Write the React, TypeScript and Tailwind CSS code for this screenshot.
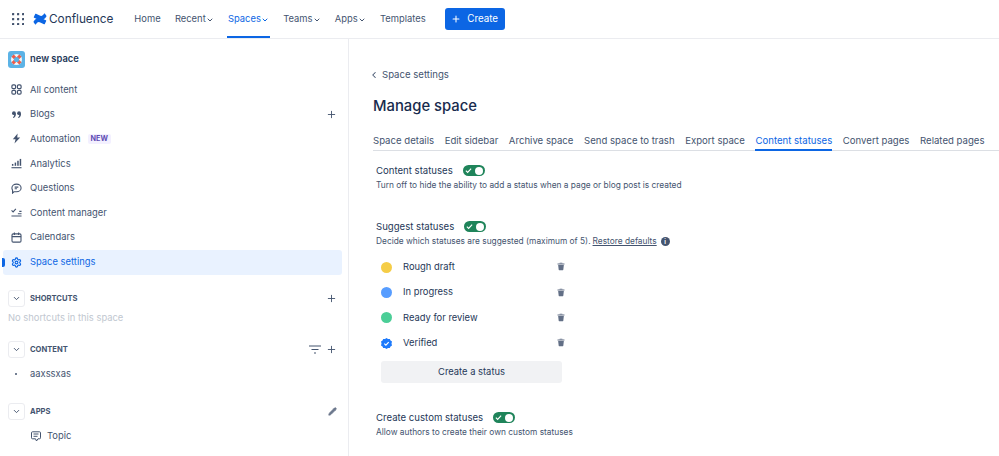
import { ChevronDown, ChevronLeft, Plus, Settings, Pencil } from 'lucide-react'
import type { ReactNode } from 'react'

const ic = { width: 11, height: 11, viewBox: '0 0 12 12', className: 'shrink-0' }

const AllContentIcon = () => (
  <svg {...ic} fill="none" stroke="#44546f" strokeWidth="1.300">
    <rect x="1" y="1" width="4" height="4" rx="1.300" /><rect x="7" y="1" width="4" height="4" rx="1.300" />
    <rect x="1" y="7" width="4" height="4" rx="1.300" /><rect x="7" y="7" width="4" height="4" rx="1.300" />
  </svg>
)
const BlogIcon = () => (
  <svg {...ic} fill="#44546f">
    <circle cx="3.200" cy="4.500" r="2.100" /><circle cx="8.800" cy="4.500" r="2.100" />
    <path d="M3.500 5.500h1.800c0 2.200-.9 3.700-2.800 4.300l-.4-.9c1-.5 1.400-1.500 1.400-3.400zM9.100 5.500h1.800c0 2.200-.9 3.700-2.800 4.300l-.4-.9c1-.5 1.400-1.500 1.400-3.400z" />
  </svg>
)
const BoltIcon = () => (
  <svg {...ic} fill="#44546f"><path d="M7.200.6 2 6.800h3L3.800 11.400 10 4.900H6.800z" /></svg>
)
const AnalyticsIcon = () => (
  <svg {...ic} fill="#44546f">
    <rect x="1" y="6.500" width="1.600" height="2" /><rect x="4" y="5" width="1.600" height="3.500" /><rect x="6.800" y="3" width="1.600" height="5.500" /><rect x="9.500" y="1" width="1.600" height="7.500" />
    <rect x="0.500" y="10" width="11" height="1.200" />
  </svg>
)
const QuestionIcon = () => (
  <svg {...ic} fill="none" stroke="#44546f" strokeWidth="1.200">
    <path d="M6 1.200c2.700 0 5 1.800 5 4.200S8.700 9.600 6 9.600H3.200L1.700 11V7.700C1.200 7 1 6.200 1 5.400 1 3 3.300 1.200 6 1.200zM4 4.500h4M4 6.300h2.500" />
  </svg>
)
const ManagerIcon = () => (
  <svg {...ic} fill="none" stroke="#44546f" strokeWidth="1.200">
    <path d="M.6 3.700l1.700 1.700L5.300 2M.5 9.800h11M7.500 7.300h4M9 4.800h2.500" />
  </svg>
)
const CalendarIcon = () => (
  <svg {...ic} fill="none" stroke="#44546f" strokeWidth="1.200">
    <rect x="1.100" y="2" width="9.800" height="9" rx="1.300" /><path d="M1 5h10M3.700.5v2.800M8.300.5v2.800" />
  </svg>
)
const TrashIcon = () => (
  <svg width="8" height="9" viewBox="0 0 9 9" fill="#626f86"><path d="M.6 1h7.800v1.300H.6zM1.300 2.900h6.400l-.6 5.300c0 .3-.3.600-.6.600H2.500c-.3 0-.6-.3-.6-.6z" /><rect x="2.800" y="0.200" width="3.400" height="1" rx="0.400" /></svg>
)

const navItems = [
  { label: 'All content', icon: AllContentIcon },
  { label: 'Blogs', icon: BlogIcon, plus: true },
  { label: 'Automation', icon: BoltIcon, badge: true },
  { label: 'Analytics', icon: AnalyticsIcon },
  { label: 'Questions', icon: QuestionIcon },
  { label: 'Content manager', icon: ManagerIcon },
  { label: 'Calendars', icon: CalendarIcon },
]

const topLinks = [
  { label: 'Home' },
  { label: 'Recent', caret: true },
  { label: 'Spaces', caret: true, active: true },
  { label: 'Teams', caret: true },
  { label: 'Apps', caret: true },
  { label: 'Templates' },
]

const tabs = ['Space details', 'Edit sidebar', 'Archive space', 'Send space to trash', 'Export space', 'Content statuses', 'Convert pages', 'Related pages']

const statuses = [
  { label: 'Rough draft', color: 'bg-[#f5cd47]' },
  { label: 'In progress', color: 'bg-[#579dff]' },
  { label: 'Ready for review', color: 'bg-[#4bce97]' },
  { label: 'Verified', color: '' },
]

function Toggle() {
  return (
    <span className="flex h-[11px] w-[22px] items-center justify-between rounded-full bg-[#1f845a] px-[2px]">
      <svg width="7" height="7" viewBox="0 0 8 8" fill="none" stroke="white" strokeWidth="1.300"><path d="M1 4.200l2 2 4-4.400" /></svg>
      <span className="h-[8px] w-[8px] rounded-full bg-white" />
    </span>
  )
}

function SectionHead({ label, right }: { label: string; right: ReactNode }) {
  return (
    <div className="flex h-[17px] items-center pl-2 pr-[11px]">
      <span className="flex h-[17px] w-[17px] items-center justify-center rounded-[3px] border border-[#ebecf0]">
        <ChevronDown size={9} strokeWidth={2.500} className="text-[#44546f]" />
      </span>
      <span className="ml-[5px] flex-1 text-[7.600px] font-bold text-[#44546f]">{label}</span>
      {right}
    </div>
  )
}

export default function App() {
  return (
    <div className="flex h-[456px] w-[999px] flex-col overflow-hidden bg-white text-[9.400px] text-[#44546f] [font-family:Inter,sans-serif]">
      <header className="flex h-[39px] shrink-0 items-center border-b-[1.500px] border-[#ebecf0] pl-3">
        <svg width="12" height="12" viewBox="0 0 12 12" fill="#44546f">
          {[1, 6, 11].flatMap((y) => [1, 6, 11].map((x) => <rect key={`${x}-${y}`} x={x - 1} y={y - 1} width="2.200" height="2.200" rx="0.500" />))}
        </svg>
        <svg width="14" height="12" viewBox="0 0 14 12" className="ml-[9px]" fill="#0c66e4">
          <path d="M.6 8.600c2.600-3.900 5.600-4.600 9-2.900l3.300 1.600c.3.100.4.400.3.700l-1.400 3c-.1.300-.5.400-.8.300l-3.200-1.600C5.500 8.500 4.500 9 3 11.200c-.2.300-.5.300-.8.200L.8 9.500C.5 9.300.4 8.900.6 8.600z" />
          <path d="M13.400 3.400c-2.600 3.900-5.600 4.600-9 2.900L1.100 4.700C.8 4.600.7 4.300.8 4l1.400-3c.1-.3.5-.4.8-.3l3.200 1.600C8.500 3.500 9.500 3 11 .8c.2-.3.5-.3.8-.2l1.400 1.900c.3.200.4.600.2.900z" />
        </svg>
        <span className="ml-[2px] pt-[1px] text-[11.800px] text-[#253858]">Confluence</span>
        <nav className="ml-[21px] flex h-full items-center gap-[14.300px]">
          {topLinks.map((l) => (
            <span key={l.label} className={`-mx-[1px] flex h-full items-center border-b-2 px-[1px] pt-[3px] ${l.active ? 'border-[#0c66e4] text-[#0c66e4]' : 'border-transparent'}`}>
              {l.label}
              {l.caret && <ChevronDown size={8} strokeWidth={3} />}
            </span>
          ))}
        </nav>
        <button className="ml-[19px] flex h-[22px] w-[60px] items-center justify-center gap-[6px] rounded-[3px] bg-[#0c66e4] text-[9.800px] text-white">
          <Plus size={10} strokeWidth={2.500} />
          Create
        </button>
      </header>

      <div className="flex min-h-0 flex-1">
        <aside className="w-[349px] shrink-0 border-r-[1.500px] border-[#ebecf0] pt-[11px]">
          <div className="flex h-[18px] items-center pl-2">
            <svg width="17" height="17" viewBox="0 0 17 17" className="shrink-0">
              <rect width="17" height="17" rx="3" fill="#5cb3e6" />
              <circle cx="8.500" cy="8.500" r="5.500" fill="#f4f5f7" />
              <path d="M4.600 4.600 12.400 12.400M12.400 4.600 4.600 12.400" stroke="#ef5c48" strokeWidth="3.200" />
              <circle cx="8.500" cy="8.500" r="2.600" fill="#5cb3e6" />
            </svg>
            <span className="ml-[5px] font-semibold text-[#253858]">new space</span>
          </div>
          <ul className="mt-[9.500px] pr-[6px]">
            {navItems.map((item) => (
              <li key={item.label} className="flex h-[24.600px] items-center pl-[11px] pr-[5px]">
                <item.icon />
                <span className="ml-[8px]">{item.label}</span>
                {item.badge && <span className="ml-[7px] rounded-[2px] bg-[#f3f0ff] px-[3px] text-[7.200px] font-bold text-[#5e4db2]">NEW</span>}
                {item.plus && <Plus size={11} strokeWidth={2} className="ml-auto" />}
              </li>
            ))}
            <li className="relative ml-[3px] flex h-[25px] items-center rounded-[3px] bg-[#e9f2ff] pl-[8px] text-[#0c66e4]">
              <span className="absolute -left-[1px] top-[8px] h-[9px] w-[3px] rounded-r-[2px] bg-[#0c66e4]" />
              <Settings size={11} strokeWidth={2.500} className="shrink-0" />
              <span className="ml-[8px]">Space settings</span>
            </li>
          </ul>

          <div className="mt-[15.500px]">
            <SectionHead label="SHORTCUTS" right={<Plus size={11} strokeWidth={2} />} />
            <p className="mt-[4px] pl-2 text-[#c1c7d0]">No shortcuts in this space</p>
          </div>
          <div className="mt-[16px]">
            <SectionHead
              label="CONTENT"
              right={
                <span className="flex items-center gap-[5px]">
                  <svg width="12" height="10" viewBox="0 0 12 10" fill="none" stroke="#44546f" strokeWidth="1.100"><path d="M0 1h12M2.500 4.500h7M5 8h2" /></svg>
                  <Plus size={11} strokeWidth={2} />
                </span>
              }
            />
            <div className="mt-[8px] flex h-[16px] items-center pl-[15px]">
              <span className="h-[2px] w-[2px] rounded-full bg-[#44546f]" />
              <span className="ml-[13px]">aaxssxas</span>
            </div>
          </div>
          <div className="mt-[21px]">
            <SectionHead label="APPS" right={<Pencil size={9} strokeWidth={2} fill="#6b778c" className="text-[#6b778c]" />} />
            <div className="mt-[8px] flex h-[16px] items-center pl-[31px]">
              <svg width="10" height="11" viewBox="0 0 10 11" fill="none" stroke="#44546f" strokeWidth="1"><path d="M1.500.8h7a1 1 0 0 1 1 1v5a1 1 0 0 1-1 1H7L5.500 10 4.500 7.800h-3a1 1 0 0 1-1-1v-5a1 1 0 0 1 1-1zM2.500 3h5M2.500 5.300h4" /></svg>
              <span className="ml-[6px]">Topic</span>
            </div>
          </div>
        </aside>

        <main className="min-w-0 flex-1 pl-[24px] pt-[29px]">
          <div className="-ml-[4px] flex items-center gap-[3px] text-[9.600px]">
            <ChevronLeft size={10} strokeWidth={2.500} />
            <span>Space settings</span>
          </div>
          <h1 className="mt-[12px] text-[14.800px] font-medium leading-[24px] text-[#172b4d]">Manage space</h1>
          <div className="mt-[16px] flex gap-[10.600px] border-b border-[#dcdfe4] text-[9.600px]">
            {tabs.map((t) => (
              <span key={t} className={`-mb-[1px] whitespace-nowrap border-b-2 ${t === 'Content statuses' ? 'border-[#0c66e4] text-[#0c66e4]' : 'border-transparent'}`}>{t}</span>
            ))}
          </div>

          <section className="mt-[13px] pl-[3px]">
            <div className="flex items-center gap-[10px] text-[9.600px] text-[#253858]"><span>Content statuses</span><Toggle /></div>
            <p className="mt-[1px] text-[8.350px]">Turn off to hide the ability to add a status when a page or blog post is created</p>
          </section>
          <section className="mt-[28px] pl-[3px]">
            <div className="flex items-center gap-[10px] text-[9.600px] text-[#253858]"><span>Suggest statuses</span><Toggle /></div>
            <p className="mt-[1px] flex items-center text-[8.350px]">
              Decide which statuses are suggested (maximum of 5).
              <span className="ml-[2px] underline">Restore defaults</span>
              <span className="ml-[4px] flex h-[9px] w-[9px] items-center justify-center rounded-full bg-[#44546f] text-[6px] font-bold text-white">i</span>
            </p>
            <ul className="mt-[7px] pl-[5px]">
              {statuses.map((s) => (
                <li key={s.label} className="flex h-[25.300px] items-center">
                  {s.color ? (
                    <span className={`h-[11px] w-[11px] rounded-full ${s.color}`} />
                  ) : (
                    <svg width="11" height="11" viewBox="0 0 11 11">
                      <path d="M5.500 0l1.500 1 1.800-.1.700 1.700 1.500 1-.500 1.900.500 1.900-1.500 1-.700 1.700L7 9.900 5.500 11 4 9.900l-1.800.2-.7-1.700L0 7.400l.5-1.900L0 3.600l1.500-1 .7-1.700L4 1z" fill="#1d7afc" />
                      <path d="M3.300 5.600l1.600 1.500 2.800-3" fill="none" stroke="white" strokeWidth="1.200" />
                    </svg>
                  )}
                  <span className="ml-[11px] w-[154px] text-[#253858]">{s.label}</span>
                  <span className="-mt-[1px]"><TrashIcon /></span>
                </li>
              ))}
            </ul>
            <button className="ml-[5px] mt-[5px] h-[22px] w-[181px] rounded-[3px] bg-[#f1f2f4] text-[#253858]">Create a status</button>
          </section>
          <section className="mt-[28px] pl-[3px]">
            <div className="flex items-center gap-[10px] text-[9.600px] text-[#253858]"><span>Create custom statuses</span><Toggle /></div>
            <p className="mt-[1px] text-[8.350px]">Allow authors to create their own custom statuses</p>
          </section>
        </main>
      </div>
    </div>
  )
}
